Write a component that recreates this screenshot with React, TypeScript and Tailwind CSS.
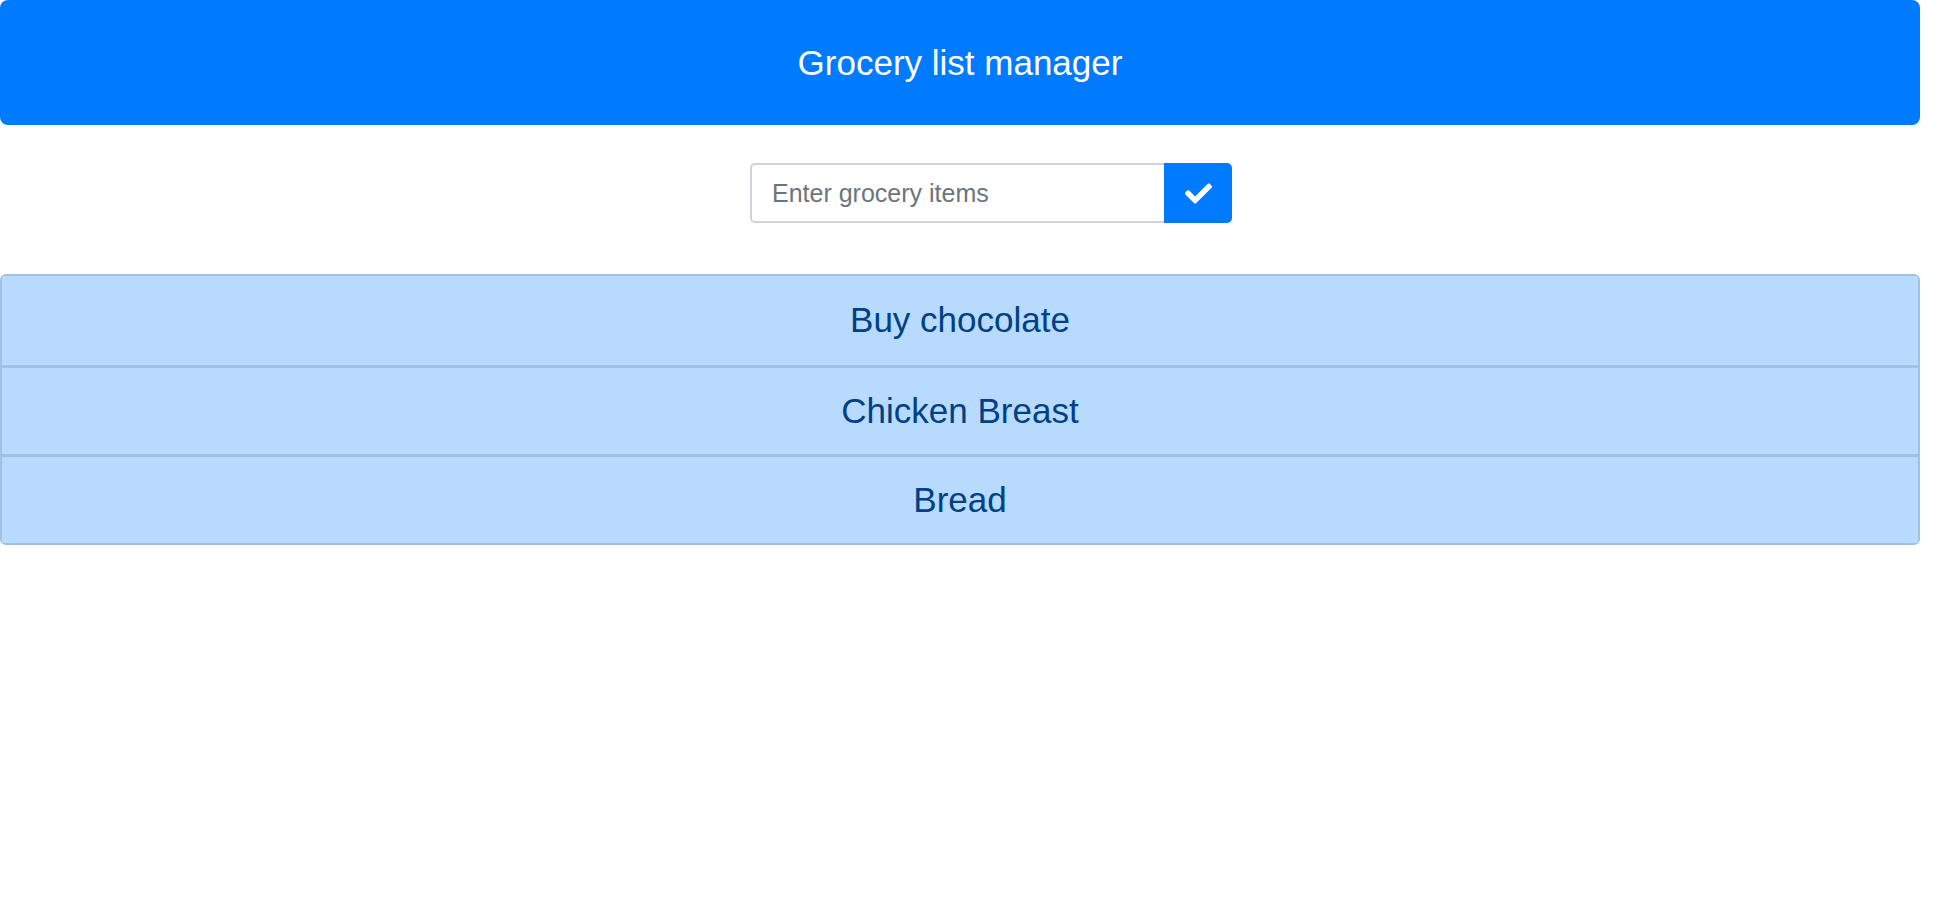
import { useState } from 'react';
import { FaCheck } from 'react-icons/fa';

// 목록 항목 기본값
const initialItems = ['Buy chocolate', 'Chicken Breast', 'Bread'];

export default function App() {
  const [items, setItems] = useState<string[]>(initialItems);
  const [text, setText] = useState('');

  const handleAdd = () => {
    if (!text.trim()) return;
    setItems([...items, text.trim()]);
    setText('');
  };

  return (
    <div
      className="min-h-screen w-full bg-white"
      style={{ fontFamily: '"Liberation Sans", Arial, sans-serif' }}
    >
      <div className="w-[1920px]">
        {/* 헤더 */}
        <div className="flex h-[125px] items-center justify-center rounded-lg bg-[#007bff]">
          <h3 className="text-[35px] leading-[52px] text-white">Grocery list manager</h3>
        </div>

        {/* 입력 폼 */}
        <div className="mt-[38px] flex justify-center pl-[62px]">
          <div className="flex h-[60px]">
            <input
              value={text}
              onChange={(e) => setText(e.target.value)}
              placeholder="Enter grocery items"
              className="h-[60px] w-[414px] rounded-l-[5px] border-2 border-r-0 border-[#ced4da] bg-white px-[20px] text-[25px] text-[#495057] outline-none placeholder:text-[#6c757d]"
            />
            <button
              onClick={handleAdd}
              className="flex h-[60px] w-[68px] items-center justify-center rounded-r-[5px] bg-[#007bff] text-white"
            >
              <FaCheck size={27} />
            </button>
          </div>
        </div>

        {/* 항목 목록 */}
        <ul className="mt-[51px] overflow-hidden rounded-[6px] border-2 border-[#a0c1e2]">
          {items.map((item, i) => (
            <li
              key={i}
              className={`flex h-[89px] items-center justify-center bg-[#b8daff] text-[35px] text-[#004085] ${
                i > 0 ? 'border-t-[3px] border-[#a0c1e2]' : ''
              }`}
            >
              {item}
            </li>
          ))}
        </ul>
      </div>
    </div>
  );
}
